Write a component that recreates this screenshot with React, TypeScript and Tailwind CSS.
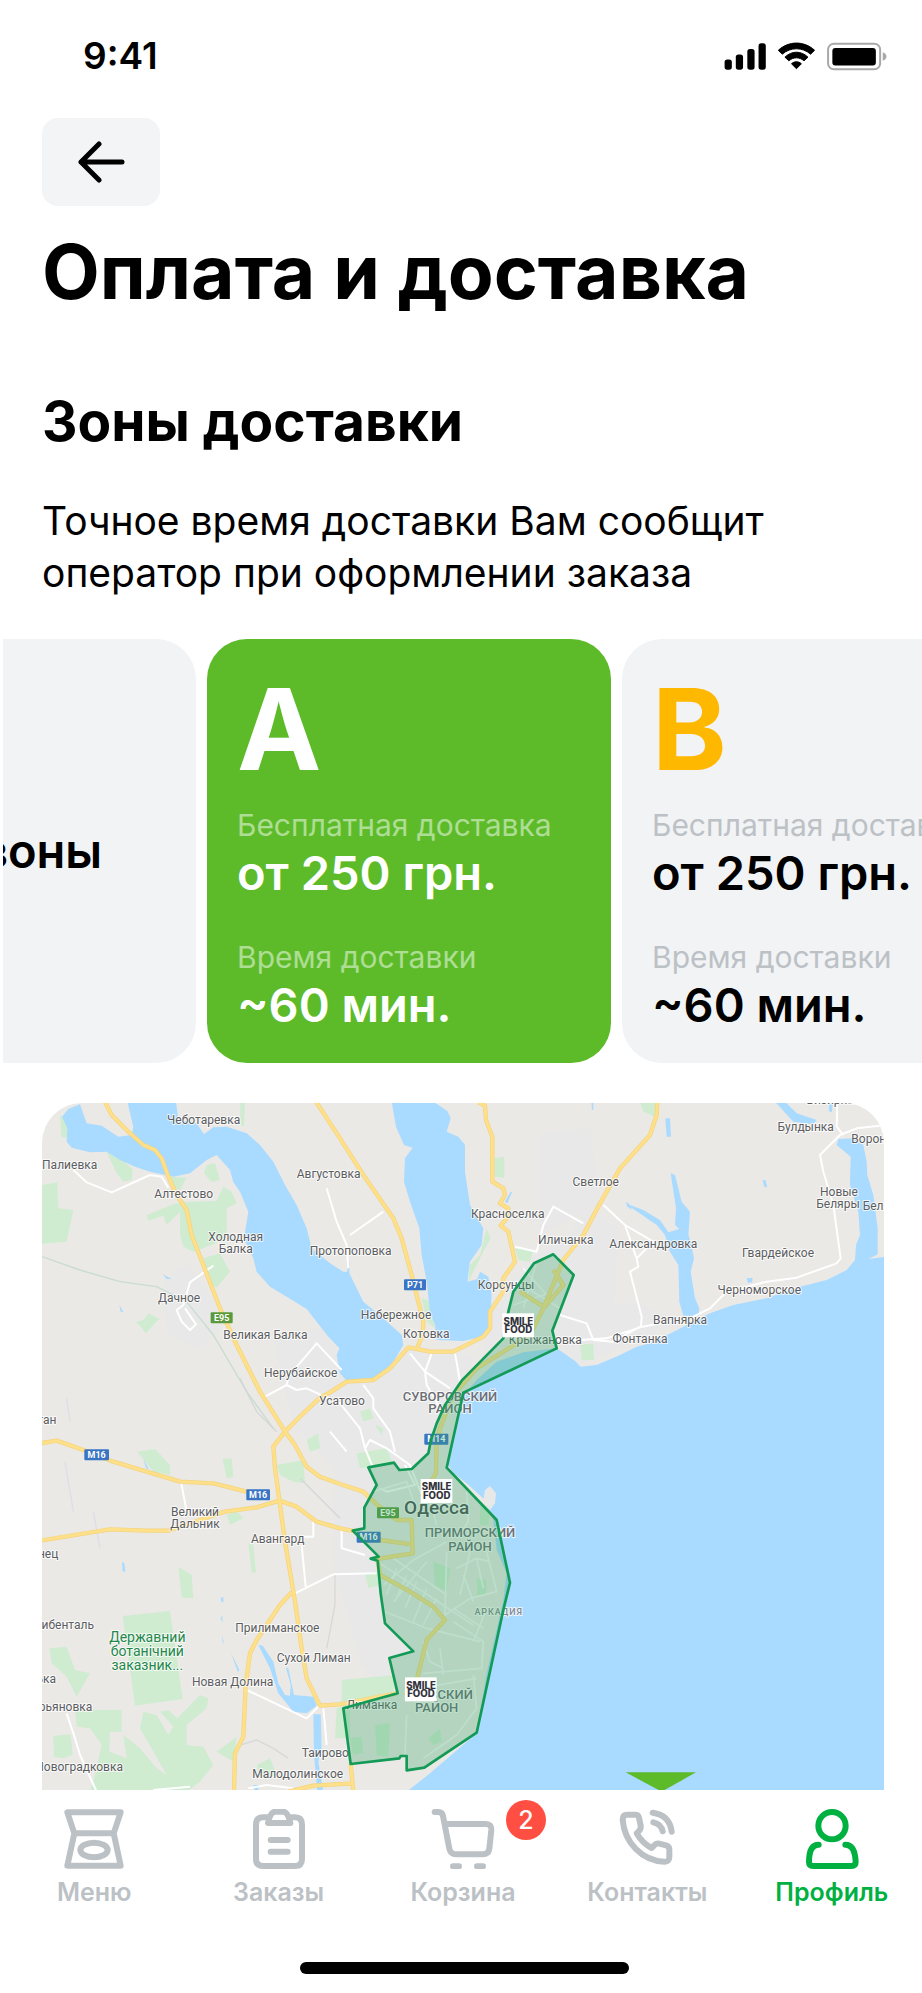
import type { ReactNode } from "react";

type Anchor = "start" | "middle" | "end";
type Label = [text: string, x: number, y: number, anchor?: Anchor];

const towns: Label[] = [
  ["Чеботаревка", 491, 86],
  ["Палиевка", 89, 221],
  ["Алтестово", 431, 310],
  ["Холодная", 587, 439],
  ["Балка", 587, 475],
  ["Дачное", 417, 622],
  ["Великая Балка", 676, 733],
  ["Нерубайское", 782, 845],
  ["ган", 49, 986, "end"],
  ["Усатово", 906, 930],
  ["Августовка", 866, 250],
  ["Протопоповка", 932, 481],
  ["Светлое", 1667, 274],
  ["Красноселка", 1403, 370],
  ["Иличанка", 1577, 446],
  ["Корсунцы", 1398, 581],
  ["Набережное", 1068, 672],
  ["Котовка", 1159, 729],
  ["Крыжановка", 1516, 746],
  ["Александровка", 1840, 460],
  ["Гвардейское", 2214, 487],
  ["Черноморское", 2158, 598],
  ["Вапнярка", 1920, 688],
  ["Фонтанка", 1800, 744],
  ["Визирка", 2370, 28],
  ["Булдынка", 2297, 109],
  ["Воронцовка", 2434, 143, "start"],
  ["Новые", 2397, 304],
  ["Беляры", 2394, 340],
  ["Беляры", 2468, 346, "start"],
  ["Великий", 465, 1263],
  ["Дальник", 465, 1299],
  ["Авангард", 713, 1344],
  ["нец", 55, 1388, "end"],
  ["ибенталь", 162, 1602, "end"],
  ["Прилиманское", 712, 1611],
  ["Сухой Лиман", 821, 1702],
  ["Новая Долина", 578, 1773],
  ["ька", 48, 1764, "end"],
  ["рьяновка", 157, 1847, "end"],
  ["Новоградковка", 249, 2028, "end"],
  ["Малодолинское", 773, 2048],
  ["Таирово", 856, 1986],
  ["Лиманка", 996, 1842],
];

const districts: Label[] = [
  ["СУВОРОВСКИЙ", 1230, 917],
  ["РАЙОН", 1230, 955],
  ["ПРИМОРСКИЙ", 1290, 1327],
  ["РАЙОН", 1290, 1367],
  ["КИЕВСКИЙ", 1196, 1811],
  ["РАЙОН", 1190, 1850],
];

const shields = [
  { text: "E95", x: 512, y: 652, w: 66, fill: "#5b9a3c" },
  { text: "P71", x: 1092, y: 553, w: 66, fill: "#3a74c4" },
  { text: "M14", x: 1153, y: 1016, w: 72, fill: "#3a74c4" },
  { text: "M16", x: 133, y: 1063, w: 74, fill: "#3a74c4" },
  { text: "M16", x: 619, y: 1183, w: 71, fill: "#3a74c4" },
  { text: "E95", x: 1011, y: 1237, w: 66, fill: "#5b9a3c" },
  { text: "M16", x: 950, y: 1310, w: 72, fill: "#3a74c4" },
];

const water = [
  "M66 65 L85 42 L120 28 L140 85 L185 92 L235 125 L275 120 L280 95 L262 20 L408 20 L415 75 L470 85 L492 118 L520 97 L560 95 L620 115 L660 150 L700 200 L735 270 L770 330 L800 400 L815 460 L870 505 L910 530 L922 530 L922 500 L928 500 L928 535 L970 620 L1030 670 L1085 720 L1090 750 L1060 800 L1020 840 L990 857 L920 857 L900 835 L890 780 L898 760 L865 725 L800 642 L740 605 L690 575 L650 530 L640 490 L612 430 L625 350 L600 290 L580 262 L570 225 L530 180 L500 195 L450 235 L400 245 L330 230 L285 215 L240 195 L200 170 L150 172 L95 158 L80 140 L82 100 Z",
  "M1055 20 L1180 20 L1222 48 L1232 70 L1220 110 L1255 125 L1275 150 L1275 230 L1290 330 L1330 400 L1325 450 L1290 500 L1282 560 L1312 552 L1320 530 L1345 545 L1355 600 L1350 690 L1325 725 L1270 738 L1190 735 L1185 690 L1170 650 L1160 560 L1145 480 L1138 400 L1110 320 L1092 260 L1095 190 L1118 158 L1092 150 L1068 95 Z",
  "M1100 2090 L1170 2035 L1310 1915 L1340 1735 L1390 1515 L1400 1435 L1370 1365 L1360 1275 L1335 1215 L1280 1165 L1240 1135 L1222 1105 L1235 1045 L1255 960 L1275 895 L1310 855 L1370 800 L1450 772 L1550 760 L1605 798 L1622 815 L1670 810 L1740 780 L1790 755 L1840 742 L1930 695 L2010 655 L2080 630 L2180 610 L2280 575 L2360 555 L2420 525 L2445 495 L2448 450 L2460 420 L2455 350 L2430 270 L2432 185 L2390 150 L2395 132 L2440 130 L2470 150 L2480 200 L2482 240 L2500 300 L2513 400 L2513 478 L2485 492 L2540 485 L2540 2090 Z",
  "M1755 325 L1810 345 L1860 375 L1885 412 L1918 402 L1905 390 L1908 340 L1892 235 L1905 240 L1925 320 L1950 350 L1945 420 L1952 440 L1962 490 L1952 530 L1965 610 L1978 640 L1975 662 L1930 662 L1918 620 L1915 510 L1890 470 L1875 420 L1850 390 Z",
  "M2205 20 L2235 20 L2270 55 L2330 75 L2320 88 L2260 80 Z",
  "M1876 70 L1890 70 L1893 125 L1880 125 Z",
  "M2168 255 L2176 255 L2182 277 L2172 275 Z",
  "M2120 550 L2138 548 L2136 562 L2124 564 Z",
  "M2368 20 L2378 20 L2376 52 L2366 48 Z",
  "M1395 320 L1412 290 L1416 292 L1402 325 Z",
  "M1654 20 L1660 20 L1660 45 L1656 45 Z",
  "M1758 320 L1770 330 L1775 345 L1762 335 Z",
  "M655 1650 L668 1652 L700 1700 L715 1765 L735 1800 L750 1802 L752 1770 L738 1718 L745 1720 L762 1800 L820 1805 L830 1832 L800 1855 L760 1850 L715 1795 L690 1720 Z",
  "M820 1858 L842 1858 L845 1960 L835 2000 L850 2090 L832 2090 L822 1980 Z",
  "M572 1672 L598 1725 L594 1732 Z",
  "M542 1510 L550 1505 L550 1522 L544 1520 Z M542 1570 L547 1560 L547 1585 Z M545 1620 L552 1645 L548 1642 Z",
  "M246 1400 L253 1405 L256 1432 L248 1428 Z",
  "M310 1093 L327 1123 L318 1120 Z",
  "M640 2070 L655 2070 L655 2090 L645 2090 Z",
  "M368 538 L395 552 L380 552 Z M238 630 L250 652 L242 650 Z",
];

const parks = [
  "M60 60 L80 75 L84 130 L64 125 Z",
  "M200 172 L240 190 L278 222 L275 255 L250 260 L230 235 Z",
  "M6 270 L52 262 L55 340 L100 345 L80 440 L6 446 Z",
  "M500 210 L525 205 L540 255 L515 262 L492 235 Z",
  "M395 245 L440 248 L420 285 L400 280 Z",
  "M320 360 L400 328 L440 320 L530 318 L550 275 L575 290 L590 325 L560 340 L560 430 L490 460 L460 470 L430 455 L420 420 L420 350 L380 390 L370 362 L325 378 Z",
  "M490 490 L540 475 L570 530 L530 578 L505 560 Z",
  "M288 680 L310 675 L325 655 L358 672 L340 690 L318 715 Z",
  "M600 20 L615 20 L612 95 L602 90 Z",
  "M800 1035 L835 1015 L840 1060 L810 1070 Z",
  "M710 1110 L790 1095 L795 1165 L760 1160 L720 1140 Z",
  "M1362 190 L1393 185 L1393 248 L1365 245 Z",
  "M1340 400 L1352 430 L1330 470 L1285 560 L1290 510 L1320 480 Z",
  "M1145 610 L1165 615 L1185 700 L1160 680 Z",
  "M1800 20 L1850 20 L1845 65 L1810 50 Z",
  "M1425 460 L1480 465 L1470 500 L1435 495 Z",
  "M1620 750 L1660 745 L1662 795 L1625 795 Z",
  "M960 950 L990 940 L1000 970 L970 980 Z M1005 990 L1030 1000 L1025 1020 Z",
  "M950 1075 L1040 1060 L1060 1110 L960 1120 Z",
  "M292 1070 L345 1062 L390 1110 L390 1140 L340 1130 Z",
  "M548 1092 L575 1090 L580 1145 L560 1150 Z",
  "M560 1260 L590 1248 L610 1270 L570 1290 Z",
  "M625 1345 L640 1350 L648 1430 L635 1435 Z",
  "M415 1415 L455 1440 L460 1510 L425 1508 Z",
  "M248 1563 L390 1548 L428 1812 L285 1832 Z",
  "M28 1660 L80 1655 L105 1725 L150 1735 L110 1805 L80 1745 L35 1705 Z",
  "M105 1845 L245 1845 L245 1910 L210 1910 L208 1970 L260 1990 L250 1920 L300 1960 L350 2020 L380 2040 L300 1900 L310 1850 L350 1860 L385 1920 L400 1895 L360 1850 L385 1845 L412 1870 L480 1800 L505 1810 L500 1840 L440 1890 L440 1950 L490 1955 L520 2010 L480 2060 L440 2090 L150 2090 L165 2040 L185 1950 L150 1900 L110 1895 Z",
  "M40 1922 L92 1918 L98 1980 L70 1990 L42 1985 Z",
  "M530 1970 L590 1925 L580 2000 Z",
  "M650 2010 L690 1990 L710 2040 L660 2050 Z",
  "M905 1755 L1065 1740 L1060 1800 L905 1820 Z",
  "M890 1840 L930 1830 L930 1930 L885 1930 Z",
  "M975 1435 L1020 1430 L1020 1470 L985 1480 Z",
  "M1180 1400 L1230 1420 L1220 1490 L1185 1470 Z M1310 1450 L1340 1455 L1338 1500 L1312 1500 Z M1320 1220 L1350 1240 L1345 1290 L1320 1290 Z",
  "M930 1930 L965 1925 L970 1975 L940 1980 Z M1005 1890 L1050 1885 L1045 1985 L1010 1980 Z M1165 1930 L1200 1900 L1205 1940 L1180 1950 Z",
];

const urban = [
  "M370 560 L440 500 L520 620 L540 700 L480 760 L380 720 Z",
  "M700 740 L840 700 L900 780 L1000 880 L1090 760 L1300 780 L1240 1100 L1200 1300 L1150 1700 L1060 1830 L960 1700 L880 1400 L880 1120 L760 990 Z",
  "M1500 110 L1650 100 L1680 330 L1500 420 Z",
  "M1560 760 L1620 640 L1800 620 L1900 690 L1620 810 Z",
  "M1300 900 L1370 600 L1480 480 L1580 430 L1640 340 L1740 400 L1720 640 L1600 720 Z",
];

const highways = [
  "M195 20 L215 60 L265 110 L310 150 L345 165 L365 190 L385 245 L410 300 L440 345 L455 420 L490 510 L540 640 L590 750 L660 890 L735 1010 L765 1050 L800 1115 L840 1145 L900 1167 L970 1190 L1010 1228 L1070 1275 L1115 1275 L1118 1375 L1010 1392",
  "M828 20 L900 130 L970 240 L1060 370 L1085 430 L1115 540 L1135 620 L1150 680 L1148 720 L1132 757",
  "M1315 22 L1335 32 L1338 75 L1357 125 L1357 260 L1390 280 L1395 300 L1380 325 L1405 340 L1400 370 L1382 392 L1405 410 L1425 500 L1390 550 L1390 590 L1350 650 L1350 700 L1330 725 L1240 770 L1170 770 L1105 757 L1050 820 L1000 855 L920 860 L870 892 L840 908 L790 955 L735 1010 L700 1055 L705 1120 L718 1215 L735 1340 L765 1520 L785 1660 L800 1750 L840 1832 L900 1828 L1070 1795",
  "M1852 20 L1850 60 L1830 120 L1740 220 L1680 325 L1630 420 L1570 495 L1510 640 L1470 720 L1430 745 L1310 820 L1240 900 L1200 1000 L1190 1040 L1188 1135 L1145 1205",
  "M0 1045 L50 1037 L130 1065 L220 1100 L420 1160 L520 1165 L620 1190",
  "M0 1337 L210 1303 L320 1307 L385 1307 L480 1275 L555 1250 L650 1237 L718 1217 L770 1235 L830 1280 L900 1300 L950 1310 M1020 1335 L1115 1348",
  "M755 1492 L720 1530 L650 1635 L630 1675 L617 1770 L610 1925 L585 1975 L582 2090",
  "M1012 1392 L1020 1440 L1110 1490 L1180 1535 L1215 1575 L1160 1635 L1130 1755",
  "M932 2007 L940 2090 M745 2090 L820 2072 L940 2065",
  "M1440 590 L1505 632 M1540 525 L1570 570 L1510 640",
];

const streets = [
  "M100 225 L140 262 L215 292 L330 240 L365 245 L385 278",
  "M520 512 L450 562 L430 630 L410 645 L425 680 L450 705 L468 688 L435 640",
  "M675 905 L740 870 L745 845 L830 745 L905 825 M740 870 L770 885 L800 880 L900 925 L960 1000 L975 1060 L1000 1120",
  "M860 280 L890 380 L920 450 L925 520 M930 420 L1030 350",
  "M1110 775 L1155 830 L1230 880 M1175 775 L1155 830 L1160 870 L1200 940 M1245 775 L1260 860",
  "M970 870 L1000 910 L1000 940 L1050 1010 L1065 1070 M870 1010 L920 1070",
  "M1425 455 L1490 470 L1510 390 L1540 335 L1630 385",
  "M1560 660 L1640 685 L1660 735 L1720 740 L1800 695 M1480 735 L1620 735 L1700 730 L1800 697 L1960 665 L2010 640 L2060 590 L2180 560 L2270 548 L2390 505 L2402 490 L2380 330 L2350 230 L2340 180 L2400 120 L2450 100 L2540 90",
  "M1690 330 L1755 390 L1840 440 L1790 490 L1755 390 M1790 490 L1795 515 L1770 530 L1805 665 L1803 695",
  "M2392 20 L2390 95 L2410 120",
  "M423 1160 L440 1250 M820 1275 L820 1325 L785 1325 M785 1350 L797 1475 M765 1495 L880 1438 L1010 1435",
  "M620 1785 L800 1870 L840 1830 M850 1840 L860 1950 M80 1855 L105 1930 L120 1980 L170 2090 M340 2085 L450 2075",
  "M625 2080 L680 2070 L760 2080 M905 1305 L905 1360 L975 1380",
  "M975 1060 L990 1035 L1040 1060 L1110 1110 L1145 1200 M1095 1110 L1125 1170 L1040 1190 L1020 1180",
];

const cityStreets = [
  "M1020 1405 L1300 1590 M1045 1380 L1220 1500 M1030 1470 L1120 1395 L1220 1340 M1060 1520 L1160 1400 M1035 1550 L1160 1600 L1320 1640",
  "M1220 1370 L1215 1560 L1290 1510 L1370 1490 L1340 1370 M1250 1420 L1310 1390 L1350 1400 M1290 1370 L1260 1500 M1310 1390 L1330 1480 M1270 1440 L1300 1520",
  "M1240 1580 L1330 1640 L1325 1720 L1150 1735 M1150 1640 L1170 1700 L1210 1720 M1200 1660 L1210 1740 M1330 1600 L1240 1540 M1340 1540 L1300 1640",
  "M1300 1740 L1310 1840 L1250 1920 L1150 1990 M1100 1860 L1095 1980 M1140 1780 L1310 1750",
  "M1000 1190 L1100 1160 L1125 1230 M1165 1200 L1190 1290 M1280 1190 L1285 1280 L1250 1330",
  "M1070 1420 L1040 1500 M1100 1440 L1065 1520 M1130 1460 L1095 1540 M1160 1480 L1120 1580 M1190 1510 L1150 1590",
  "M1430 560 L1560 640 M1450 520 L1520 600 M1490 500 L1450 640 M1420 630 L1540 590",
];

const zone =
  "M1540 478 L1601 540 L1537 707 L1550 760 L1270 893 L1235 1050 L1220 1118 L1370 1275 L1410 1463 L1390 1545 L1310 1913 L1153 2018 L1100 2026 L1100 1983 L1082 1983 L1078 1990 L932 2007 L910 1840 L1073 1795 L1048 1689 L1120 1669 L1035 1585 L1022 1495 L1013 1397 L992 1391 L1016 1385 L938 1307 L973 1300 L973 1238 L1010 1170 L985 1117 L1062 1103 L1078 1125 L1115 1122 L1165 1075 L1173 1035 L1190 985 L1215 930 L1265 857 L1390 730 L1405 650 L1420 590 L1482 505 Z";

const shops = [
  { x: 1387, y: 655 },
  { x: 1142, y: 1152 },
  { x: 1095, y: 1747 },
];

type MapLabelsProps = { items: Label[]; size: number; weight: number; fill: string; className?: string };

function MapLabels({ items, size, weight, fill, className }: MapLabelsProps) {
  return (
    <g
      className={className}
      fontSize={size}
      fontWeight={weight}
      fill={fill}
      stroke="#ffffff"
      strokeOpacity={0.75}
      strokeWidth={6}
      strokeLinejoin="round"
      paintOrder="stroke"
    >
      {items.map(([text, x, y, anchor = "middle"], i) => (
        <text key={i} x={x} y={y} textAnchor={anchor}>
          {text}
        </text>
      ))}
    </g>
  );
}

function DeliveryMap() {
  return (
    <svg
      viewBox="6 24 2526 2061"
      className="block w-full rounded-t-[40px] font-['Roboto',sans-serif]"
      role="img"
      aria-label="Карта зон доставки"
    >
      <rect x="0" y="0" width="2540" height="2100" fill="#ebe9e6" />
      <g fill="#e8e8e8">{urban.map((d) => <path key={d} d={d} />)}</g>
      <g fill="#cfecd1">{parks.map((d) => <path key={d} d={d} />)}</g>
      <g fill="#a9daff">{water.map((d) => <path key={d} d={d} />)}</g>
      <path d="M1335 1185 L1350 1173 L1368 1195 L1365 1225 L1350 1245 L1330 1215 Z" fill="#e8e8e8" />
      <g fill="none" stroke="#c9dcd0" strokeWidth="4">
        <path d="M6 485 L120 525 L240 560 L350 575 L440 620 L520 720 L620 890 L700 1000" />
        <path d="M75 1100 L100 1250 M160 1250 L180 1360 M80 910 L90 980" stroke="#dcdfe6" />
        <path d="M600 1950 L650 1935 L700 1960 L745 1990" stroke="#d8d8d8" />
        <path d="M600 850 L650 950 L710 1010 M780 1150 L900 1270" stroke="#d5d6da" />
        <path d="M885 1440 L885 1530 L860 1660" stroke="#d8d8d8" />
      </g>
      <g fill="none" stroke="#ffffff" strokeWidth="6" strokeLinejoin="round">
        {streets.map((d) => <path key={d} d={d} />)}
      </g>
      <g fill="none" stroke="#f6f7f7" strokeWidth="5" strokeLinejoin="round">
        {cityStreets.map((d) => <path key={d} d={d} />)}
      </g>
      <g fill="none" stroke="#f4d37c" strokeWidth="13" strokeLinejoin="round">
        {highways.map((d) => <path key={d} d={d} />)}
      </g>
      <g fill="none" stroke="#fee08a" strokeWidth="9" strokeLinejoin="round">
        {highways.map((d) => <path key={d} d={d} />)}
      </g>

      <MapLabels items={towns} size={36} weight={400} fill="#5b5d61" />
      <MapLabels items={districts} size={39} weight={500} fill="#6c6f74" />
      <MapLabels items={[["Одесса", 1190, 1258]]} size={57} weight={500} fill="#4c4e52" />
      <MapLabels items={[["АРКАДИЯ", 1376, 1561]]} size={27} weight={500} fill="#85888d" className="tracking-widest" />
      <MapLabels
        items={[
          ["Державний", 322, 1642],
          ["ботанічний", 322, 1684],
          ["заказник...", 322, 1726],
        ]}
        size={42}
        weight={400}
        fill="#24874b"
      />

      {shields.map((s) => (
        <g key={`${s.x}-${s.y}`}>
          <rect x={s.x} y={s.y} width={s.w} height="33" rx="3" fill={s.fill} />
          <text x={s.x + s.w / 2} y={s.y + 26} textAnchor="middle" fontSize="27" fontWeight="700" fill="#ffffff">
            {s.text}
          </text>
        </g>
      ))}

      <path d={zone} fill="#34a568" fillOpacity="0.3" stroke="#129a56" strokeWidth="8" strokeLinejoin="round" />

      {shops.map((s) => (
        <g key={s.y} className="font-['Inter',sans-serif]" fontWeight="800" fill="#34343c">
          <rect x={s.x} y={s.y} width="95" height="72" fill="#ffffff" />
          <text x={s.x + 48} y={s.y + 34} textAnchor="middle" fontSize="29">SMILE</text>
          <text x={s.x + 48} y={s.y + 60} textAnchor="middle" fontSize="29">FOOD</text>
        </g>
      ))}

      <path d="M1757 2032 L1968 2032 L1865 2090 Z" fill="#5dbb29" />
    </svg>
  );
}

function StatusBar() {
  return (
    <header className="flex items-center justify-between pt-9 pr-[34px] pl-[83px]">
      <time className="text-[37px] leading-10 font-semibold">9:41</time>
      <svg viewBox="25 18 495 88" className="h-[29px] w-[165px]" aria-label="Сигнал, Wi-Fi, заряд батареи" role="img">
        <rect x="27" y="71" width="22" height="31" rx="8" />
        <rect x="61" y="56" width="22" height="46" rx="8" />
        <rect x="96" y="39" width="22" height="63" rx="8" />
        <rect x="130" y="22" width="22" height="80" rx="8" />
        <path d="M190 43 C222 14 268 14 300 43 L288 55 C263 33 227 33 202 55 Z" stroke="#000" strokeWidth="3" strokeLinejoin="round" />
        <path d="M210 64 C231 44 259 44 280 64 L268 75 C254 63 236 63 222 75 Z" stroke="#000" strokeWidth="3" strokeLinejoin="round" />
        <path d="M230 84 C239 76 251 76 260 84 L245 99 Z" stroke="#000" strokeWidth="3" strokeLinejoin="round" />
        <rect x="341" y="23" width="158" height="78" rx="18" fill="none" stroke="#a8a8a8" strokeWidth="6" />
        <rect x="354" y="36" width="132" height="53" rx="9" />
        <path d="M507 49 Q518 53 518 62 Q518 71 507 75 Z" fill="#a8a8a8" />
      </svg>
    </header>
  );
}

type Zone = { name: string; free: string; time: string; active?: boolean };

function ZoneCard({ name, free, time, active = false }: Zone) {
  const label = active ? "text-white/50" : "text-[#bcc1c5]";
  return (
    <button
      type="button"
      aria-pressed={active}
      className={`flex w-[404px] shrink-0 flex-col items-start rounded-[40px] px-[30px] pt-10 pb-[30px] text-left whitespace-nowrap ${
        active ? "bg-[#5dbb29] text-white" : "bg-[#f2f3f5] text-black"
      }`}
    >
      <span className={`text-[113px] leading-[100px] font-bold ${active ? "text-white" : "text-[#ffb800]"}`}>{name}</span>
      <span className={`mt-[26px] text-[30px] leading-10 ${label}`}>Бесплатная доставка</span>
      <span className="text-[47px] leading-14 font-semibold">{free}</span>
      <span className={`mt-9 text-[30px] leading-10 ${label}`}>Время доставки</span>
      <span className="text-[47px] leading-14 font-semibold">{time}</span>
    </button>
  );
}

function NavItem({ label, active = false, badge, children }: { label: string; active?: boolean; badge?: number; children: ReactNode }) {
  return (
    <a
      href="#"
      aria-current={active ? "page" : undefined}
      className={`flex flex-col items-center pt-[19px] ${active ? "text-[#00b141]" : "text-[#bcc1c5]"}`}
    >
      <span className="relative">
        {children}
        {badge !== undefined && (
          <span className="absolute -top-[9px] left-[75px] flex size-10 items-center justify-center rounded-full bg-[#ff4f42] text-[25px] leading-none font-medium text-white">
            {badge}
          </span>
        )}
      </span>
      <span className="mt-[9px] text-[25px] leading-7 font-semibold">{label}</span>
    </a>
  );
}

const iconStroke = {
  fill: "none",
  stroke: "currentColor",
  strokeWidth: 18,
  strokeLinecap: "round",
  strokeLinejoin: "round",
  "aria-hidden": true,
} as const;

function BottomNav() {
  return (
    <nav className="-mr-0.5 grid grid-cols-5 bg-white pl-0.5">
      <NavItem label="Меню">
        <svg viewBox="191 88 180 180" className="size-[60px]" {...iconStroke}>
          <path d="M201 98 H361 L340 161 H222 Z M222 161 L201 258 H361 L340 161" />
          <ellipse cx="281" cy="211" rx="41" ry="22" />
        </svg>
      </NavItem>
      <NavItem label="Заказы">
        <svg viewBox="747 90 180 180" className="size-[60px]" {...iconStroke}>
          <path d="M800 115 H790 Q768 115 768 137 V240 Q768 261 790 261 H885 Q906 261 906 240 V137 Q906 115 885 115 H875" />
          <path d="M804 132 H871 Q864 98 849 98 H826 Q811 98 804 132 Z" />
          <path d="M812 183 H863 M812 218 H863" />
        </svg>
      </NavItem>
      <NavItem label="Корзина" badge={2}>
        <svg viewBox="1296 89 190 180" className="h-[60px] w-[64px]" {...iconStroke}>
          <path d="M1306 98 H1318 Q1328 98 1331 110 L1350 208 Q1354 225 1370 225 H1450 Q1468 225 1470 208 L1476 152 Q1477 134 1460 134 H1337" />
          <path d="M1361 261 H1379 M1433 261 H1451" />
        </svg>
      </NavItem>
      <NavItem label="Контакты">
        <svg viewBox="470 148 180 180" className="size-[60px]" {...iconStroke}>
          <path d="M500 165 H525 Q534 165 536 174 L541 198 Q542 208 536 214 L529 221 Q546 251 574 265 L584 255 Q589 250 597 252 L617 257 Q627 260 627 269 V292 Q627 307 612 306 C545 303 492 248 487 180 Q487 165 500 165 Z" />
          <path d="M577 159 Q628 166 634 216 M579 188 Q603 193 607 215" />
        </svg>
      </NavItem>
      <NavItem label="Профиль" active>
        <svg viewBox="1027 149 180 180" className="size-[60px]" {...iconStroke}>
          <circle cx="1117" cy="199" r="41" />
          <path d="M1077 256 Q1048 256 1048 308 Q1048 320 1060 320 H1175 Q1188 320 1188 308 Q1186 256 1157 256" />
        </svg>
      </NavItem>
    </nav>
  );
}

export default function App() {
  return (
    <div className="flex min-h-screen flex-col overflow-hidden bg-white font-['Inter',sans-serif] text-black">
      <StatusBar />

      <main className="flex flex-col">
        <div className="mt-[42px] px-[42px]">
          <button
            type="button"
            aria-label="Назад"
            className="flex h-[88px] w-[118px] items-center justify-center rounded-2xl bg-[#f3f4f5]"
          >
            <svg
              viewBox="0 0 48 42"
              className="h-[42px] w-12"
              fill="none"
              stroke="currentColor"
              strokeWidth="5"
              strokeLinecap="round"
              strokeLinejoin="round"
              aria-hidden="true"
            >
              <path d="M22 3 L4 21 L22 39 M4 21 H45" />
            </svg>
          </button>
          <h1 className="mt-5 text-[75px] leading-[92px] font-bold">Оплата и доставка</h1>
          <h2 className="mt-[68px] text-[55px] leading-[70px] font-bold">Зоны доставки</h2>
          <p className="mt-[39px] max-w-[780px] text-[39px] leading-[52px]">
            Точное время доставки Вам сообщит оператор при оформлении заказа
          </p>
        </div>

        <section aria-label="Зоны" className="mt-10 ml-[3px] overflow-hidden">
          <div className="-ml-[211px] flex gap-[11px]">
            <button
              type="button"
              className="flex w-[404px] shrink-0 items-center justify-center rounded-[40px] bg-[#f2f3f5] text-[47px] leading-14 font-semibold"
            >
              Все зоны
            </button>
            <ZoneCard name="A" free="от 250 грн." time="~60 мин." active />
            <ZoneCard name="B" free="от 250 грн." time="~60 мин." />
          </div>
        </section>

        <div className="mt-10 pr-[38px] pl-[42px]">
          <DeliveryMap />
        </div>
      </main>

      <BottomNav />
      <div className="mt-14 mb-[19px] ml-[6px] h-3 w-[329px] self-center rounded-full bg-black" />
    </div>
  );
}
